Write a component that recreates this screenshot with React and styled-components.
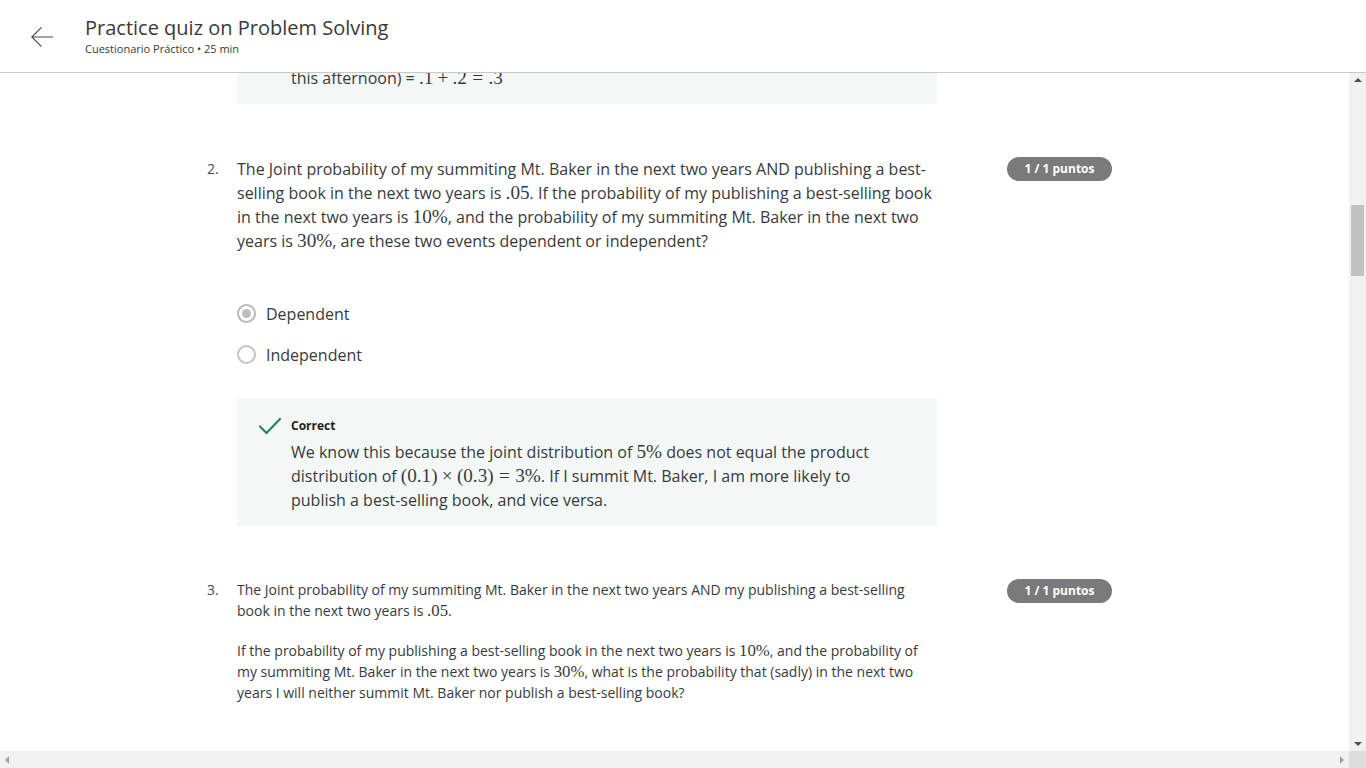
import React from 'react';
import styled, { createGlobalStyle } from 'styled-components';

const GlobalStyle = createGlobalStyle`
  html, body {
    margin: 0;
    padding: 0;
    background: #ffffff;
    font-family: "Open Sans", "Liberation Sans", sans-serif;
    color: #373a3c;
  }
  * { box-sizing: border-box; }
`;

const Page = styled.div`
  display: flex;
  flex-direction: column;
  width: 1366px;
  height: 768px;
  overflow: hidden;
`;

const Header = styled.header`
  display: flex;
  align-items: center;
  gap: 31px;
  height: 73px;
  padding-left: 30px;
  border-bottom: 1px solid #c8c8c8;
  flex-shrink: 0;
`;

const BackButton = styled.button`
  display: flex;
  align-items: center;
  justify-content: center;
  width: 24px;
  height: 24px;
  padding: 0;
  border: none;
  background: none;
  color: #4a4a4a;
  margin-top: 2px;
`;

const HeaderText = styled.div`
  display: flex;
  flex-direction: column;
`;

const Title = styled.h1`
  margin: 0;
  font-size: 20px;
  font-weight: 400;
  line-height: 26px;
  color: #3a3a3a;
`;

const Subtitle = styled.div`
  font-size: 11px;
  line-height: 16px;
  color: #373a3c;
`;

const Body = styled.div`
  display: flex;
  flex: 1;
  min-height: 0;
`;

const Content = styled.main`
  flex: 1;
  overflow: hidden;
  padding-left: 207px;
`;

const VTrack = styled.div`
  display: flex;
  flex-direction: column;
  align-items: center;
  width: 17px;
  background: #f1f1f1;
  padding: 5px 0;
`;

const HBar = styled.div`
  display: flex;
  height: 17px;
  flex-shrink: 0;
`;

const HTrack = styled.div`
  flex: 1;
  display: flex;
  align-items: center;
  justify-content: space-between;
  padding: 0 5px;
  background: #f1f1f1;
`;

const Corner = styled.div`
  width: 17px;
  background: #dcdcdc;
`;

const Arrow = styled.span`
  width: 0;
  height: 0;
  border-style: solid;
  ${(p) =>
    p.dir === 'up'
      ? `border-width: 0 4px 4px 4px; border-color: transparent transparent #505050 transparent;`
      : p.dir === 'down'
      ? `border-width: 4px 4px 0 4px; border-color: #505050 transparent transparent transparent;`
      : p.dir === 'left'
      ? `border-width: 4px 4px 4px 0; border-color: transparent #a3a3a3 transparent transparent;`
      : `border-width: 4px 0 4px 4px; border-color: transparent transparent transparent #a3a3a3;`}
`;

const Thumb = styled.div`
  width: 13px;
  height: 71px;
  margin-top: 123px;
  background: #c1c1c1;
`;

const Spacer = styled.div`
  flex: 1;
`;

const QuestionRow = styled.section`
  display: grid;
  grid-template-columns: 30px 700px 70px 105px;
  align-items: start;
  margin-top: ${(p) => (p.tail ? '-7px' : '53px')};
`;

const Number = styled.div`
  font-size: 14px;
  line-height: ${(p) => (p.small ? '21px' : '24px')};
  color: #4a4a4a;
`;

const QuestionBody = styled.div`
  grid-column: 2;
`;

const Prompt = styled.p`
  margin: 0 0 ${(p) => (p.gap ? '19px' : '0')};
  font-size: ${(p) => (p.small ? '14px' : '16px')};
  line-height: ${(p) => (p.small ? '21px' : '24px')};
  color: #373a3c;
`;

const Math = styled.span`
  font-family: "Liberation Serif", "DejaVu Serif", serif;
  font-size: 1.2em;
  line-height: 1;
  white-space: nowrap;
`;

// binary operators and relations get extra room, like typeset math
const Op = styled.span`
  margin: 0 ${(p) => (p.rel ? '0.28em' : '0.22em')};
`;

const Badge = styled.div`
  grid-column: 4;
  height: 24px;
  border-radius: 12px;
  background: #7a7a7a;
  color: #ffffff;
  font-size: 12px;
  font-weight: 700;
  line-height: 24px;
  text-align: center;
`;

const Options = styled.div`
  display: flex;
  flex-direction: column;
  margin-top: 40px;
`;

const Option = styled.label`
  display: flex;
  align-items: center;
  gap: 10px;
  height: 41px;
  font-size: 16px;
  color: #373a3c;
`;

const Radio = styled.span`
  display: flex;
  align-items: center;
  justify-content: center;
  width: 19px;
  height: 19px;
  border-radius: 50%;
  border: 2px solid ${(p) => (p.checked ? '#b8b8b8' : '#c4c4c4')};
  &::after {
    content: '';
    width: 9px;
    height: 9px;
    border-radius: 50%;
    background: ${(p) => (p.checked ? '#bdbdbd' : 'transparent')};
  }
`;

const Feedback = styled.div`
  display: flex;
  gap: 12px;
  margin-top: ${(p) => (p.tail ? '0' : '23px')};
  padding: ${(p) => (p.tail ? '0' : '18px')} 40px 14px 22px;
  background: #f3f8f6;
`;

const FeedbackIcon = styled.div`
  width: 20px;
  flex-shrink: 0;
  padding-top: 1px;
`;

const FeedbackText = styled.div`
  display: flex;
  flex-direction: column;
  gap: 4px;
`;

const FeedbackTitle = styled.div`
  font-size: 12px;
  font-weight: 700;
  line-height: 20px;
  color: #1f1f1f;
`;

const FeedbackBody = styled.div`
  font-size: 16px;
  line-height: 24px;
  color: #373a3c;
`;

const CheckIcon = () => (
  <svg width="22" height="18" viewBox="0 0 22 18" fill="none">
    <path d="M1 9.5 L7.5 16 L21 2" stroke="#1f8354" strokeWidth="2" strokeLinecap="square" />
  </svg>
);

const BackArrow = () => (
  <svg width="26" height="24" viewBox="0 0 26 24" fill="none">
    <path d="M25 12 H2 M12.5 1.5 L2 12 L12.5 22.5" stroke="#4a4a4a" strokeWidth="1.3" />
  </svg>
);

const App = () => (
  <>
    <GlobalStyle />
    <Page>
      <Header>
        <BackButton aria-label="Back">
          <BackArrow />
        </BackButton>
        <HeaderText>
          <Title>Practice quiz on Problem Solving</Title>
          <Subtitle>Cuestionario Práctico • 25 min</Subtitle>
        </HeaderText>
      </Header>

      <Body>
        <Content>
          <QuestionRow tail>
            <QuestionBody>
              <Feedback tail>
                <FeedbackIcon />
                <FeedbackBody>
                  this afternoon) = <Math>.1<Op>+</Op>.2<Op rel>=</Op>.3</Math>
                </FeedbackBody>
              </Feedback>
            </QuestionBody>
          </QuestionRow>

          <QuestionRow>
            <Number>2.</Number>
            <QuestionBody>
              <Prompt>
                The Joint probability of my summiting Mt. Baker in the next two years AND publishing a
                best-selling book in the next two years is <Math>.05</Math>. If the probability of my
                publishing a best-selling book in the next two years is <Math>10%</Math>, and the
                probability of my summiting Mt. Baker in the next two years is <Math>30%</Math>, are these
                two events dependent or independent?
              </Prompt>
              <Options>
                <Option>
                  <Radio checked />
                  Dependent
                </Option>
                <Option>
                  <Radio />
                  Independent
                </Option>
              </Options>
              <Feedback>
                <FeedbackIcon>
                  <CheckIcon />
                </FeedbackIcon>
                <FeedbackText>
                  <FeedbackTitle>Correct</FeedbackTitle>
                  <FeedbackBody>
                    We know this because the joint distribution of <Math>5%</Math> does not equal the
                    product distribution of{' '}
                    <Math>
                      (0.1)<Op>×</Op>(0.3)<Op rel>=</Op>3%
                    </Math>
                    . If I summit Mt. Baker, I am more likely to publish a best-selling book, and vice
                    versa.
                  </FeedbackBody>
                </FeedbackText>
              </Feedback>
            </QuestionBody>
            <Badge>1 / 1 puntos</Badge>
          </QuestionRow>

          <QuestionRow>
            <Number small>3.</Number>
            <QuestionBody>
              <Prompt small gap>
                The Joint probability of my summiting Mt. Baker in the next two years AND my publishing a
                best-selling book in the next two years is <Math>.05</Math>.
              </Prompt>
              <Prompt small>
                If the probability of my publishing a best-selling book in the next two years is{' '}
                <Math>10%</Math>, and the probability of my summiting Mt. Baker in the next two years is{' '}
                <Math>30%</Math>, what is the probability that (sadly) in the next two years I will neither
                summit Mt. Baker nor publish a best-selling book?
              </Prompt>
            </QuestionBody>
            <Badge>1 / 1 puntos</Badge>
          </QuestionRow>
        </Content>

        <VTrack>
          <Arrow dir="up" />
          <Thumb />
          <Spacer />
          <Arrow dir="down" />
        </VTrack>
      </Body>

      <HBar>
        <HTrack>
          <Arrow dir="left" />
          <Arrow dir="right" />
        </HTrack>
        <Corner />
      </HBar>
    </Page>
  </>
);

export default App;
